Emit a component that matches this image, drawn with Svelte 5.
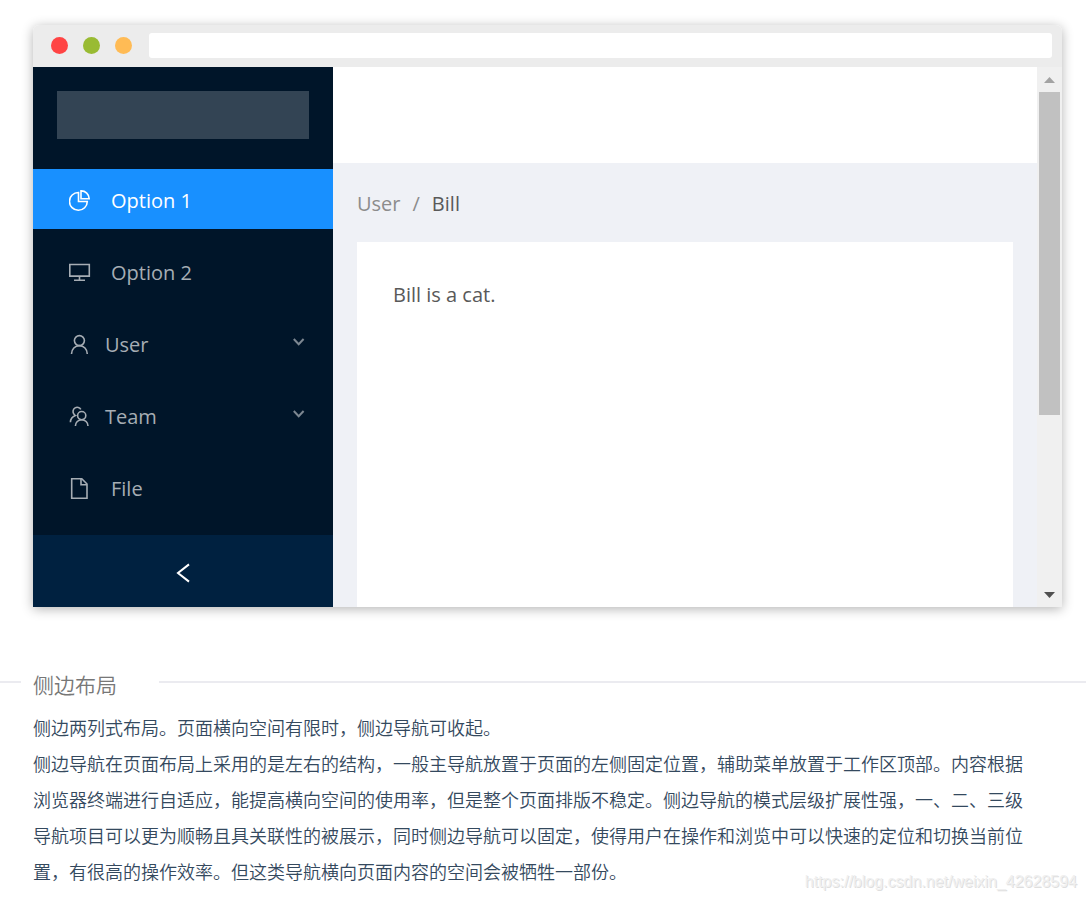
<script>
  const items = [
    { id: 'pie', label: 'Option 1' },
    { id: 'desktop', label: 'Option 2' },
    { id: 'user', label: 'User', sub: true },
    { id: 'team', label: 'Team', sub: true },
    { id: 'file', label: 'File' }
  ];
  let selected = $state('pie');
</script>

<main>
  <section class="browser">
    <div class="toolbar">
      <span class="dot red"></span>
      <span class="dot green"></span>
      <span class="dot amber"></span>
      <input class="address" type="text" aria-label="Address" />
    </div>
    <div class="viewport">
      <aside>
        <div class="logo"></div>
        <nav>
          {#each items as item}
            <button
              class="item"
              class:selected={selected === item.id}
              class:sub={item.sub}
              onclick={() => (selected = item.id)}
            >
              <svg class="icon" viewBox="0 0 22 22" aria-hidden="true">
                {#if item.id === 'pie'}
                  <path d="M9.5 2.5V11.5H18.3A8.9 8.9 0 1 1 9.5 2.5Z" />
                  <path d="M12 .9V8.8H20.2A8 8 0 0 0 12 .9Z" />
                {:else if item.id === 'desktop'}
                  <path d="M.8 2.5H20.3V14.1H.8ZM10.5 14.5V18.3M5 18.3H16" />
                {:else if item.id === 'user'}
                  <circle cx="10.4" cy="6.6" r="5" />
                  <path d="M2.5 20A7.9 8.4 0 0 1 18.3 20" />
                {:else if item.id === 'team'}
                  <circle cx="12.7" cy="9.6" r="4.1" />
                  <path d="M6.4 20A6.3 6.3 0 0 1 19 20" />
                  <path d="M11.8 3.4A4.1 4.1 0 0 0 4.6 7.6Q5 8.8 6.4 9.6C3.6 10.6 1.6 12.8 1.4 16.2" />
                {:else}
                  <path d="M2.7 .8H12.8L18 6V20.2H2.7Z" />
                  <path d="M12 .8V6.8H18" />
                {/if}
              </svg>
              <span class="label">{item.label}</span>
              {#if item.sub}
                <svg class="chevron" viewBox="0 0 12 8" aria-hidden="true">
                  <path d="M.8 1L5.7 6.2L10.6 1" />
                </svg>
              {/if}
            </button>
          {/each}
        </nav>
        <button class="collapse" aria-label="Collapse">
          <svg viewBox="0 0 14 20" aria-hidden="true"><path d="M13 1.4L2 10L13 18.6" /></svg>
        </button>
      </aside>
      <div class="page">
        <header></header>
        <div class="content">
          <div class="crumbs">
            <a href="#user">User</a><span class="slash">/</span><span class="current">Bill</span>
          </div>
          <div class="card">Bill is a cat.</div>
        </div>
      </div>
      <div class="scrollbar">
        <button aria-label="Scroll up">
          <svg viewBox="0 0 12 6" aria-hidden="true"><path fill="#a3a3a3" d="M0 6L5.5 0L11 6Z" /></svg>
        </button>
        <div class="track"><div class="thumb"></div></div>
        <button aria-label="Scroll down">
          <svg viewBox="0 0 12 6" aria-hidden="true"><path fill="#505050" d="M0 0L5.5 6L11 0Z" /></svg>
        </button>
      </div>
    </div>
  </section>

  <section class="notes">
    <h2>侧边布局</h2>
    <div class="text">
      <p>侧边两列式布局。页面横向空间有限时，侧边导航可收起。</p>
      <p>侧边导航在页面布局上采用的是左右的结构，一般主导航放置于页面的左侧固定位置，辅助菜单放置于工作区顶部。内容根据浏览器终端进行自适应，能提高横向空间的使用率，但是整个页面排版不稳定。侧边导航的模式层级扩展性强，一、二、三级导航项目可以更为顺畅且具关联性的被展示，同时侧边导航可以固定，使得用户在操作和浏览中可以快速的定位和切换当前位置，有很高的操作效率。但这类导航横向页面内容的空间会被牺牲一部份。</p>
    </div>
    <span class="watermark">https://blog.csdn.net/weixin_42628594</span>
  </section>
</main>

<style>
  :global(body) {
    background: #fff;
  }
  main {
    box-sizing: border-box;
    padding-top: 25px;
    font-family: 'Open Sans', 'Noto Sans', 'Noto Sans CJK SC', sans-serif;
    font-size: 20px;
    color: #595959;
  }
  button {
    border: 0;
    padding: 0;
    background: none;
    font: inherit;
    cursor: pointer;
  }
  .browser {
    margin: 0 24px 0 33px;
    border-radius: 6px 6px 0 0;
    box-shadow: 0 2px 12px rgba(0, 0, 0, 0.3);
  }
  .toolbar {
    display: flex;
    align-items: center;
    gap: 15px;
    padding: 8px 10px 9px 18px;
    background: #ececec;
    border-radius: 6px 6px 0 0;
  }
  .dot {
    width: 17px;
    height: 17px;
    border-radius: 50%;
  }
  .red {
    background: #f44;
  }
  .green {
    background: #9b3;
  }
  .amber {
    background: #fb5;
  }
  .address {
    flex: 1;
    min-width: 0;
    height: 25px;
    margin-left: 2px;
    padding: 0 8px;
    box-sizing: border-box;
    border: 0;
    border-radius: 3px;
    background: #fff;
  }
  .viewport {
    display: flex;
  }
  aside {
    display: flex;
    flex-direction: column;
    width: 300px;
    background: #001529;
  }
  .logo {
    height: 48px;
    margin: 24px 24px 30px;
    background: #334454;
  }
  nav {
    display: flex;
    flex-direction: column;
    gap: 12px;
    margin-bottom: 18px;
  }
  .item {
    display: flex;
    align-items: center;
    gap: 20px;
    height: 60px;
    box-sizing: border-box;
    padding: 3px 28px 0 36px;
    color: #a6adb4;
    text-align: left;
  }
  .item.sub {
    gap: 14px;
  }
  .item.selected {
    background: #1890ff;
    color: #fff;
  }
  .icon {
    width: 22px;
    height: 22px;
  }
  svg {
    display: block;
    flex: none;
  }
  .icon,
  .chevron,
  .collapse svg {
    fill: none;
    stroke: currentColor;
    stroke-width: 1.6;
  }
  .label {
    flex: 1;
  }
  .chevron {
    width: 12px;
    height: 8px;
    margin-bottom: 6px;
    stroke-width: 2;
    opacity: 0.75;
  }
  .collapse {
    display: flex;
    align-items: center;
    justify-content: center;
    height: 72px;
    padding-top: 3px;
    background: #002140;
    color: #fff;
  }
  .collapse svg {
    width: 14px;
    height: 20px;
    stroke-width: 2;
  }
  .page {
    flex: 1;
    min-width: 0;
    display: flex;
    flex-direction: column;
    background: #eff1f6;
  }
  header {
    height: 96px;
    background: #fff;
  }
  .content {
    flex: 1;
    display: flex;
    flex-direction: column;
    padding: 24px 24px 0;
  }
  .crumbs {
    display: flex;
    gap: 12px;
    margin-bottom: 21px;
    line-height: 34px;
    color: #8c8c8c;
  }
  .crumbs a {
    color: inherit;
    text-decoration: none;
  }
  .current {
    color: #595959;
  }
  .card {
    flex: 1;
    padding: 36px;
    background: #fff;
    line-height: 34px;
  }
  .scrollbar {
    display: flex;
    flex-direction: column;
    width: 25px;
    background: #f0f0f0;
  }
  .scrollbar button {
    display: flex;
    align-items: center;
    justify-content: center;
    height: 25px;
  }
  .scrollbar svg {
    width: 12px;
    height: 6px;
  }
  .track {
    flex: 1;
    padding: 0 2px;
  }
  .thumb {
    height: 66%;
    background: #c1c1c1;
  }
  .notes {
    position: relative;
    margin-top: 60px;
    font-weight: 350;
  }
  h2 {
    display: flex;
    align-items: center;
    margin: 0;
    font-size: 21px;
    font-weight: 350;
    line-height: 36px;
    color: #777;
  }
  h2::before,
  h2::after {
    content: '';
    height: 2px;
    margin-bottom: 6px;
    background: #ebebf0;
  }
  h2::before {
    width: 21px;
    margin-right: 12px;
  }
  h2::after {
    flex: 1;
    margin-left: 42px;
  }
  .text {
    padding: 7px 57px 9px 33px;
    font-size: 18px;
    line-height: 36px;
    color: #34495e;
  }
  p {
    margin: 0;
  }
  .watermark {
    position: absolute;
    right: 9px;
    bottom: 7px;
    font: 16px/20px 'Liberation Sans', sans-serif;
    color: #f0f0f0;
    text-shadow: 1px 1px 0 #dedede;
  }
</style>
